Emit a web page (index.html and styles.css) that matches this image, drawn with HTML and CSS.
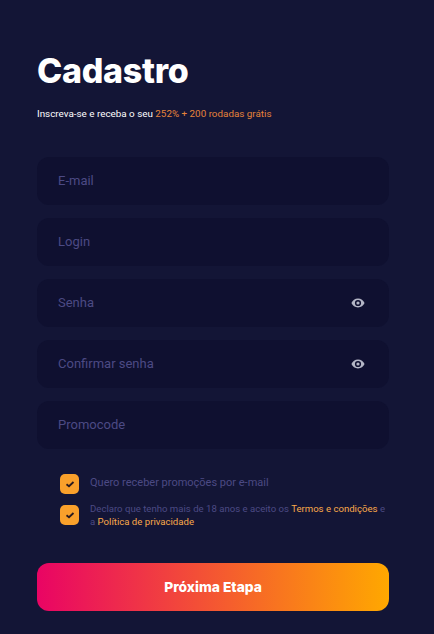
FILE: index.html
```html
<!DOCTYPE html>
<html lang="pt-BR">

<head>
    <meta charset="UTF-8">
    <meta name="viewport" content="width=device-width, initial-scale=1.0">
    <title>Cadastro</title>
    <link rel="stylesheet" href="styles.css">
</head>

<body>
    <div class="container">
        <h1>Cadastro</h1>
        <p class="subtitle">Inscreva-se e receba o seu <span>252% + 200 rodadas grátis</span></p>

        <form class="fields">
            <div class="field"><input type="text" placeholder="E-mail"></div>
            <div class="field"><input type="text" placeholder="Login"></div>
            <div class="field">
                <input type="password" placeholder="Senha">
                <svg class="eye" viewBox="0 0 14 10"><path fill-rule="evenodd" d="M7 .6C4 .6 1.6 2.5.4 5c1.2 2.5 3.6 4.4 6.6 4.4s5.4-1.9 6.6-4.4C12.4 2.5 10 .6 7 .6zM7 8.1A3.1 3.1 0 1 1 7 1.9a3.1 3.1 0 0 1 0 6.2zM7 3.4a1.6 1.6 0 1 0 0 3.2 1.6 1.6 0 0 0 0-3.2z"/></svg>
            </div>
            <div class="field">
                <input type="password" placeholder="Confirmar senha">
                <svg class="eye" viewBox="0 0 14 10"><path fill-rule="evenodd" d="M7 .6C4 .6 1.6 2.5.4 5c1.2 2.5 3.6 4.4 6.6 4.4s5.4-1.9 6.6-4.4C12.4 2.5 10 .6 7 .6zM7 8.1A3.1 3.1 0 1 1 7 1.9a3.1 3.1 0 0 1 0 6.2zM7 3.4a1.6 1.6 0 1 0 0 3.2 1.6 1.6 0 0 0 0-3.2z"/></svg>
            </div>
            <div class="field"><input type="text" placeholder="Promocode"></div>
        </form>

        <div class="checks">
            <div class="check">
                <span class="box"><svg viewBox="0 0 10 8"><path d="M1.5 4.2 4 6.2 8.5 2"/></svg></span>
                <p class="big">Quero receber promoções por e-mail</p>
            </div>
            <div class="check">
                <span class="box"><svg viewBox="0 0 10 8"><path d="M1.5 4.2 4 6.2 8.5 2"/></svg></span>
                <p>Declaro que tenho mais de 18 anos e aceito os <a href="#">Termos e condições</a> e a <a href="#">Política de privacidade</a></p>
            </div>
        </div>

        <button type="button">Próxima Etapa</button>
    </div>
</body>

</html>
```

FILE: styles.css
```css
* {
    margin: 0;
    padding: 0;
    box-sizing: border-box;
    font-family: "Roboto", sans-serif;
}

body {
    background: #131536;
    height: 634px;
    overflow: hidden;
}

.container {
    padding: 50px 45px 0 37px;
}

h1 {
    font-family: "Inter", sans-serif;
    font-size: 34px;
    font-weight: 800;
    line-height: 41px;
    letter-spacing: -0.3px;
    color: #fff;
}

.subtitle {
    margin-top: 16px;
    font-size: 9.85px;
    line-height: 14px;
    color: #fff;
}

.subtitle span {
    color: #e5833a;
}

.fields {
    margin-top: 36px;
    display: flex;
    flex-direction: column;
    gap: 13px;
}

.field {
    height: 48px;
    padding: 0 24px 0 21px;
    display: flex;
    align-items: center;
    background: #0f1030;
    border-radius: 12px;
}

.field input {
    flex: 1;
    min-width: 0;
    padding-bottom: 1px;
    background: none;
    border: 0;
    outline: 0;
    font-size: 13px;
    color: #fff;
}

.field input::placeholder {
    color: #4c4a84;
    opacity: 1;
}

.eye {
    width: 14px;
    height: 10px;
    fill: #b4b6c6;
}

.checks {
    margin-top: 25px;
    padding-left: 23px;
    display: flex;
    flex-direction: column;
    gap: 8px;
}

.check {
    display: flex;
    align-items: center;
    gap: 11px;
}

.box {
    flex: none;
    width: 19px;
    height: 20px;
    display: flex;
    align-items: center;
    justify-content: center;
    background: #f9a02b;
    border-radius: 5px;
}

.box svg {
    width: 10px;
    height: 8px;
    fill: none;
    stroke: #2a1a20;
    stroke-width: 1.8;
}

.check p {
    font-size: 9.6px;
    line-height: 13px;
    color: #4c4a84;
}

.check p.big {
    margin-bottom: 3px;
    font-size: 11px;
}

.check a {
    color: #f9a94a;
    text-decoration: none;
}

button {
    display: block;
    width: 352px;
    height: 48px;
    margin-top: 35px;
    background: linear-gradient(90deg, #e90464, #ffa800);
    border: 0;
    border-radius: 12px;
    font-family: "Inter", sans-serif;
    font-size: 13.8px;
    font-weight: 800;
    color: #fff;
}
```
